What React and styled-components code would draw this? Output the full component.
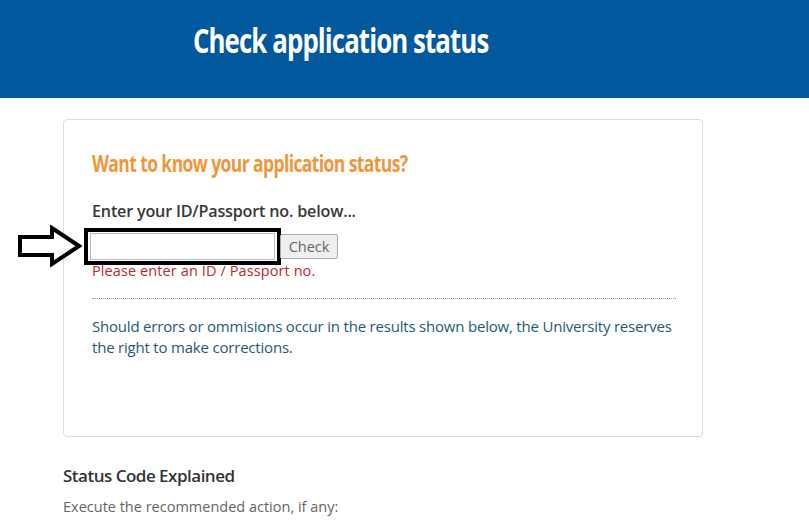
import React from "react";
import styled, { createGlobalStyle } from "styled-components";

const Global = createGlobalStyle`
  html, body {
    margin: 0;
    padding: 0;
    background: #fff;
    font-family: "Open Sans", "Liberation Sans", sans-serif;
  }
`;

const Header = styled.header`
  background-color: #02589c;
  height: 98px;
  padding-left: 193px;
  box-sizing: border-box;
  display: flex;
  align-items: flex-start;
  h1 {
    margin: 17px 0 0;
    color: #fff;
    font-family: "Open Sans", sans-serif;
    font-weight: 700;
    font-size: 34px;
    letter-spacing: -1.2px;
    transform: scaleX(0.76);
    transform-origin: left center;
    white-space: nowrap;
  }
`;

const Main = styled.main`
  padding: 21px 0 0 63px;
  width: 640px;
`;

const Card = styled.section`
  border: 1px solid #dcdcdc;
  border-radius: 4px;
  height: 318px;
  box-sizing: border-box;
  padding: 27px 28px 0 28px;
`;

const Title = styled.h2`
  margin: 0;
  color: #f0963a;
  font-family: "Open Sans", sans-serif;
  font-weight: 700;
  font-size: 23.5px;
  letter-spacing: -0.8px;
  transform: scaleX(0.745);
  transform-origin: left center;
  white-space: nowrap;
`;

const Label = styled.p`
  margin: 20px 0 0;
  color: #383838;
  font-size: 17px;
  font-weight: 600;
  letter-spacing: -0.2px;
  transform: scaleX(0.95);
  transform-origin: left center;
  white-space: nowrap;
`;

const FormRow = styled.div`
  margin-top: 6px;
  display: flex;
  align-items: center;
  position: relative;
`;

const Arrow = styled.svg`
  position: absolute;
  left: -74px;
  top: -3px;
`;

const Highlight = styled.div`
  margin-left: -8px;
  border: 4px solid #000;
  display: flex;
  height: 37px;
  box-sizing: border-box;
  width: 197px;
  align-items: center;
  justify-content: center;
`;

const Input = styled.input`
  width: 185px;
  height: 27px;
  box-sizing: border-box;
  border: 1px solid #bbb;
  background: #fff;
  outline: none;
`;

const Button = styled.button`
  margin-left: -1px;
  height: 25px;
  width: 58px;
  background: #efefef;
  border: 1px solid #aaa;
  border-radius: 2px;
  color: #666;
  font-family: "Open Sans", sans-serif;
  font-size: 14.5px;
  padding: 0;
`;

const Error = styled.div`
  margin-top: -4px;
  color: #c0282d;
  font-size: 14.5px;
  letter-spacing: 0.1px;
`;

const Divider = styled.hr`
  margin: 18px 0 0;
  border: none;
  border-top: 1px dotted #999;
  width: 584px;
`;

const Note = styled.p`
  margin: 17px 0 0;
  color: #1f5a78;
  font-size: 15px;
  line-height: 21px;
  letter-spacing: -0.2px;
`;

const Section = styled.div`
  margin-top: 27px;
  h3 {
    margin: 0;
    color: #333;
    font-size: 17px;
    font-weight: 600;
    letter-spacing: -0.5px;
  }
  p {
    margin: 10px 0 0;
    color: #666;
    font-size: 14.5px;
  }
`;

const App = () => {
  return (
    <>
      <Global />
      <Header>
        <h1>Check application status</h1>
      </Header>
      <Main>
        <Card>
          <Title>Want to know your application status?</Title>
          <Label>Enter your ID/Passport no. below...</Label>
          <FormRow>
            <Arrow width="64" height="42" viewBox="0 0 64 42">
              <path
                d="M2 12 H34 V3 L61 21 L34 39 V30 H2 Z"
                fill="#fff"
                stroke="#000"
                strokeWidth="4"
                strokeLinejoin="miter"
              />
            </Arrow>
            <Highlight>
              <Input type="text" />
            </Highlight>
            <Button>Check</Button>
          </FormRow>
          <Error>Please enter an ID / Passport no.</Error>
          <Divider />
          <Note>
            Should errors or ommisions occur in the results shown below, the
            University reserves the right to make corrections.
          </Note>
        </Card>
        <Section>
          <h3>Status Code Explained</h3>
          <p>Execute the recommended action, if any:</p>
        </Section>
      </Main>
    </>
  );
};

export default App;
